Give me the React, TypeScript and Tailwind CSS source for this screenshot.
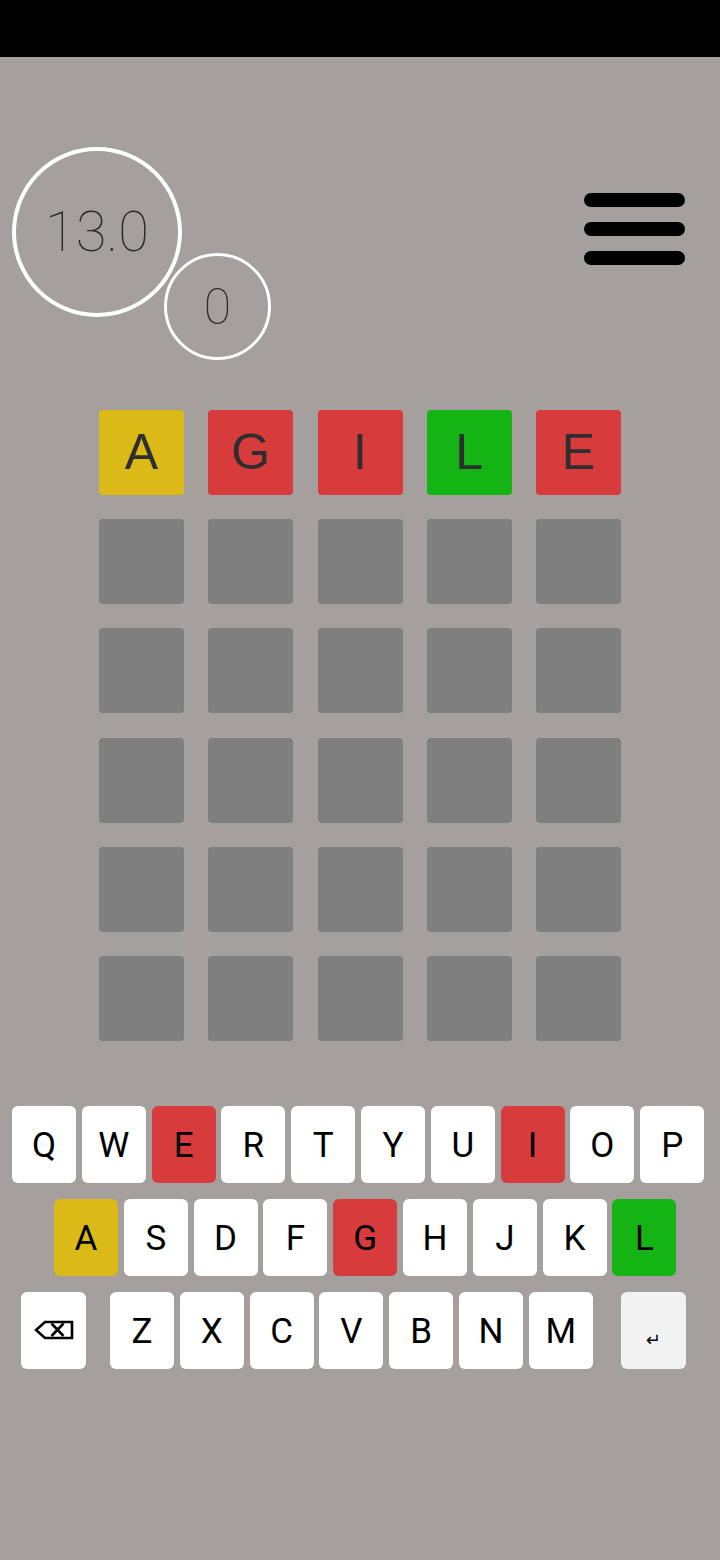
import React from 'react';

const tileColors: Record<string, string> = {
  yellow: 'bg-[#dbb916]',
  red: 'bg-[#d73b3b]',
  green: 'bg-[#15b415]',
  empty: 'bg-[#7f7f7f]',
};

const firstRow = [
  { l: 'A', c: 'yellow' },
  { l: 'G', c: 'red' },
  { l: 'I', c: 'red' },
  { l: 'L', c: 'green' },
  { l: 'E', c: 'red' },
];

const keyState: Record<string, string> = {
  E: 'bg-[#d73b3b]',
  I: 'bg-[#d73b3b]',
  G: 'bg-[#d73b3b]',
  A: 'bg-[#dbb916]',
  L: 'bg-[#15b415]',
};

function Key({ k }: { k: string }) {
  return (
    <div
      className={`w-[64px] h-[77px] pt-[3px] rounded-[6px] flex items-center justify-center text-[35px] text-black ${keyState[k] ?? 'bg-white'}`}
      style={{ fontFamily: 'Roboto, sans-serif' }}
    >
      {k}
    </div>
  );
}

export default function App() {
  const rows = Array.from({ length: 6 }, (_, r) =>
    r === 0 ? firstRow : Array.from({ length: 5 }, () => ({ l: '', c: 'empty' }))
  );

  return (
    <div className="w-[720px] h-[1560px] bg-[#a59f9e] flex flex-col">
      {/* status bar */}
      <div className="h-[57px] bg-black shrink-0"></div>

      {/* Header */}
      <div className="flex justify-between items-start pt-[90px] pl-[12px] pr-[35px]">
        <div className="flex items-start">
          <div className="w-[170px] h-[170px] rounded-full border-[4.5px] border-white flex items-center justify-center">
            <span
              className="text-[56px] font-thin text-[#2a2a2a] leading-none"
              style={{ fontFamily: 'Roboto, sans-serif' }}
            >
              13.0
            </span>
          </div>
          <div className="w-[107px] h-[107px] -ml-[18px] mt-[106px] rounded-full border-[3px] border-white flex items-center justify-center">
            <span
              className="text-[50px] font-thin text-[#2a2a2a] leading-none"
              style={{ fontFamily: 'Roboto, sans-serif' }}
            >
              0
            </span>
          </div>
        </div>
        <div className="mt-[46px] flex flex-col gap-[15px]">
          <div className="w-[101px] h-[14px] rounded-full bg-black"></div>
          <div className="w-[101px] h-[14px] rounded-full bg-black"></div>
          <div className="w-[101px] h-[14px] rounded-full bg-black"></div>
        </div>
      </div>

      {/* Board */}
      <div className="mt-[50px] mx-auto grid grid-cols-5 gap-x-[24.25px] gap-y-[24.2px]">
        {rows.flat().map((t, i) => (
          <div
            key={i}
            className={`w-[85px] h-[85px] rounded-[4px] flex items-center justify-center text-[50px] text-[#2e2e2e] ${tileColors[t.c]}`}
            style={{ fontFamily: '"Liberation Sans", Arial, sans-serif' }}
          >
            {t.l}
          </div>
        ))}
      </div>

      {/* Keyboard */}
      <div className="mt-[65px] flex flex-col gap-[16px]">
        <div className="flex gap-[5.8px] pl-[12px]">
          {'QWERTYUIOP'.split('').map((k) => (
            <Key key={k} k={k} />
          ))}
        </div>
        <div className="flex gap-[5.8px] pl-[54px]">
          {'ASDFGHJKL'.split('').map((k) => (
            <Key key={k} k={k} />
          ))}
        </div>
        <div className="flex pl-[21px]">
          <div className="w-[65px] h-[77px] rounded-[6px] bg-white flex items-center justify-center">
            <svg width="40" height="20" viewBox="0 0 40 20" fill="none" stroke="black" strokeWidth="2.6">
              <path d="M38 2 H11 L2 10 L11 18 H38 Z" strokeLinejoin="miter" />
              <path d="M17.5 3.5 L29.5 16 M29.5 3.5 L17.5 16" />
            </svg>
          </div>
          <div className="flex gap-[5.8px] ml-[24px]">
            {'ZXCVBNM'.split('').map((k) => (
              <Key key={k} k={k} />
            ))}
          </div>
          <div className="ml-[28px] w-[65px] h-[77px] rounded-[6px] bg-[#f2f2f2] flex items-center justify-center">
            <span
              className="text-[18px] text-black mt-[18px]"
              style={{ fontFamily: '"DejaVu Sans", sans-serif' }}
            >
              ↵
            </span>
          </div>
        </div>
      </div>
    </div>
  );
}
